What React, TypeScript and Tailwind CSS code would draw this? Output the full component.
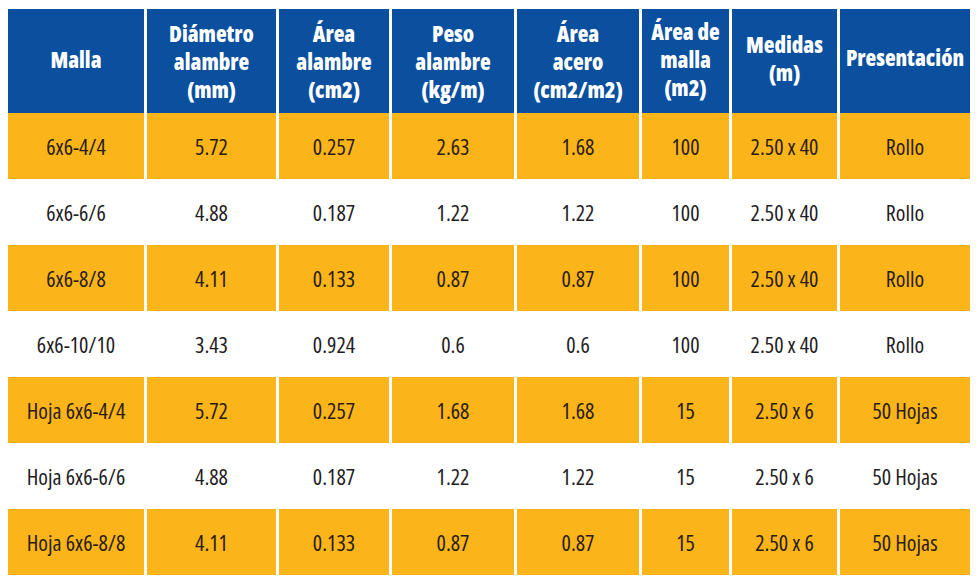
const headers: { lines: string[]; cls?: string }[] = [
  { lines: ['Malla'], cls: 'pb-[4px]' },
  { lines: ['Diámetro', 'alambre', '(mm)'] },
  { lines: ['Área', 'alambre', '(cm2)'] },
  { lines: ['Peso', 'alambre', '(kg/m)'] },
  { lines: ['Área', 'acero', '(cm2/m2)'] },
  { lines: ['Área de', 'malla', '(m2)'], cls: 'leading-[26px] pb-[4px]' },
  { lines: ['Medidas', '(m)'], cls: 'pb-[6px]' },
  { lines: ['Presentación'], cls: 'text-[15px] pb-[8px]' },
];

const rows = [
  ['6x6-4/4', '5.72', '0.257', '2.63', '1.68', '100', '2.50 x 40', 'Rollo'],
  ['6x6-6/6', '4.88', '0.187', '1.22', '1.22', '100', '2.50 x 40', 'Rollo'],
  ['6x6-8/8', '4.11', '0.133', '0.87', '0.87', '100', '2.50 x 40', 'Rollo'],
  ['6x6-10/10', '3.43', '0.924', '0.6', '0.6', '100', '2.50 x 40', 'Rollo'],
  ['Hoja 6x6-4/4', '5.72', '0.257', '1.68', '1.68', '15', '2.50 x 6', '50 Hojas'],
  ['Hoja 6x6-6/6', '4.88', '0.187', '1.22', '1.22', '15', '2.50 x 6', '50 Hojas'],
  ['Hoja 6x6-8/8', '4.11', '0.133', '0.87', '0.87', '15', '2.50 x 6', '50 Hojas'],
];

export default function App() {
  return (
    <div className="w-[977px] h-[583px] bg-white pl-[8px] pt-[9px] font-['Open_Sans',sans-serif] [font-stretch:75%]">
      <div className="grid grid-cols-[136px_129px_110px_122px_122px_87px_105px_130px] gap-x-[3px] w-[962px]">
        {headers.map((h, i) => (
          <div
            key={i}
            className={`h-[104px] bg-[#0b4f9f] text-white font-extrabold text-[22px] leading-[28px] flex flex-col items-center justify-center text-center ${h.cls ?? ''}`}
          >
            {h.lines.map((l) => (
              <span key={l}>{l}</span>
            ))}
          </div>
        ))}
        {rows.map((r, ri) =>
          r.map((c, ci) => (
            <div
              key={`${ri}-${ci}`}
              className={`h-[66px] flex items-center justify-center text-[22px] font-medium ${
                ri % 2 === 0 ? 'bg-[#fbb51a] text-[#2a1c10]' : 'bg-white text-[#1f1d24]'
              }`}
            >
              {c}
            </div>
          ))
        )}
      </div>
    </div>
  );
}
